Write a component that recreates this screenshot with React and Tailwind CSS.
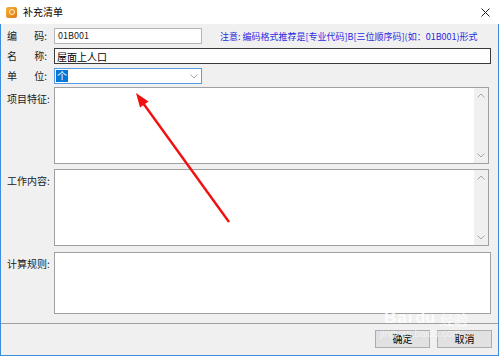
import React from 'react';

const FONT = { fontFamily: '"Noto Sans CJK SC", "Microsoft YaHei", sans-serif' };

function Chevron({ up = false }) {
  return (
    <svg width="8" height="5" viewBox="0 0 8 5" className="block">
      <path d={up ? 'M0.5 4.5 L4 1 L7.5 4.5' : 'M0.5 0.5 L4 4 L7.5 0.5'} fill="none" stroke="#a6a6a6" strokeWidth="1" />
    </svg>
  );
}

function Label({ chars }) {
  // two-character labels are spread across the column, like the dialog does
  if (chars.length === 2) {
    return (
      <div className="w-[40px] flex justify-between text-[10px] text-[#1a1a1a] leading-none">
        <span>{chars[0]}</span>
        <span>{chars[1]}:</span>
      </div>
    );
  }
  return <div className="w-[40px] text-[10px] text-[#1a1a1a] leading-none whitespace-nowrap">{chars}:</div>;
}

function Memo({ label, height, scroll }) {
  return (
    <div className="flex items-start">
      <div className="w-[47px] shrink-0 pt-[7px]">
        <Label chars={label} />
      </div>
      <div
        className={`flex shrink-0 bg-white border border-[#a0a0a0] ${scroll ? 'w-[435px]' : 'w-[437px]'}`}
        style={{ height }}
      >
        <div className="flex-1" />
        {scroll && (
          <div className="w-[14px] bg-[#f0f0f0] flex flex-col justify-between items-center py-[5px]">
            <Chevron up />
            <Chevron />
          </div>
        )}
      </div>
    </div>
  );
}

export default function App() {
  return (
    <div className="w-[500px] h-[356px] bg-white relative overflow-hidden" style={FONT}>
      {/* title bar */}
      <div className="h-[24px] w-[499px] bg-white flex items-center pl-[6px] pr-[9px]">
        <div className="w-[11px] h-[11px] rounded-[2px] bg-gradient-to-br from-[#f7b233] to-[#e0761a] flex items-center justify-center">
          <div className="w-[6px] h-[6px] rounded-full border border-[#fff3c8]" />
        </div>
        <span className="ml-[6px] text-[10px] text-black leading-none">补充清单</span>
        <div className="flex-1" />
        <svg width="9" height="9" viewBox="0 0 9 9">
          <path d="M0.5 0.5 L8.5 8.5 M8.5 0.5 L0.5 8.5" stroke="#222" strokeWidth="1" />
        </svg>
      </div>

      {/* body */}
      <div className="w-[499px] h-[332px] bg-[#f0f0f0] border-l border-r border-b border-[#3b8de0] flex flex-col">
        <div className="flex-1 pl-[6px] pt-[4px] flex flex-col">
          <div className="flex items-center h-[16px]">
            <div className="w-[47px] shrink-0"><Label chars="编码" /></div>
            <div className="w-[148px] shrink-0 h-[16px] bg-white border border-[#b4b4b4] flex items-center pl-[3px] text-[9px] text-[#222]">
              01B001
            </div>
            <span className="ml-[18px] text-[9px] text-[#2a2ae0] whitespace-nowrap leading-none">
              注意: 编码格式推荐是[专业代码]B[三位顺序码](如：01B001)形式
            </span>
          </div>

          <div className="flex items-center h-[16px] mt-[4px]">
            <div className="w-[47px] shrink-0"><Label chars="名称" /></div>
            <div className="w-[437px] shrink-0 h-[16px] bg-white border border-[#3a3a3a] flex items-center pl-[2px] text-[10px] text-black">
              屋面上人口
            </div>
          </div>

          <div className="flex items-center h-[16px] mt-[4px]">
            <div className="w-[47px] shrink-0"><Label chars="单位" /></div>
            <div className="w-[148px] shrink-0 h-[16px] bg-white border border-[#569de5] flex items-center pl-[1px] pr-[3px]">
              <span className="bg-[#0078d7] text-white text-[10px] leading-[12px] px-[1px]">个</span>
              <div className="flex-1" />
              <Chevron />
            </div>
          </div>

          <div className="mt-[3px] flex flex-col gap-[5px]">
            <Memo label="项目特征" height={77} scroll />
            <Memo label="工作内容" height={77} scroll />
            <div className="mt-[1px]">
              <Memo label="计算规则" height={62} />
            </div>
          </div>
        </div>

        {/* footer */}
        <div className="h-[32px] border-t border-[#a0a0a0] flex justify-end items-start pt-[6px] pr-[6px] gap-[7px]">
          <button className="w-[55px] h-[18px] bg-[#e1e1e1] border border-[#adadad] text-[10px] text-black leading-none">确定</button>
          <button className="w-[55px] h-[18px] bg-[#e1e1e1] border border-[#adadad] text-[10px] text-black leading-none">取消</button>
        </div>
      </div>

      {/* red annotation arrow */}
      <svg className="absolute left-0 top-0 pointer-events-none" width="500" height="356">
        <line x1="229" y1="222" x2="143" y2="103" stroke="#f01010" strokeWidth="2.4" />
        <polygon points="136,93 148.5,101.5 140,107.5" fill="#f01010" />
      </svg>

      {/* watermark */}
      <div className="absolute left-[384px] top-[309px] pointer-events-none text-white/80 leading-none">
        <div className="flex items-end gap-[2px]" style={{ fontFamily: '"Liberation Sans", sans-serif' }}>
          <span className="text-[17px] font-bold tracking-[1px]">Bai</span>
          <span className="text-[16px] font-bold">du</span>
          <span className="text-[14px] ml-[3px]" style={FONT}>经验</span>
        </div>
        <div className="text-[10px] mt-[3px] ml-[-4px] text-white/60" style={{ fontFamily: '"Liberation Sans", sans-serif' }}>jingyan.baidu.com</div>
      </div>
    </div>
  );
}
